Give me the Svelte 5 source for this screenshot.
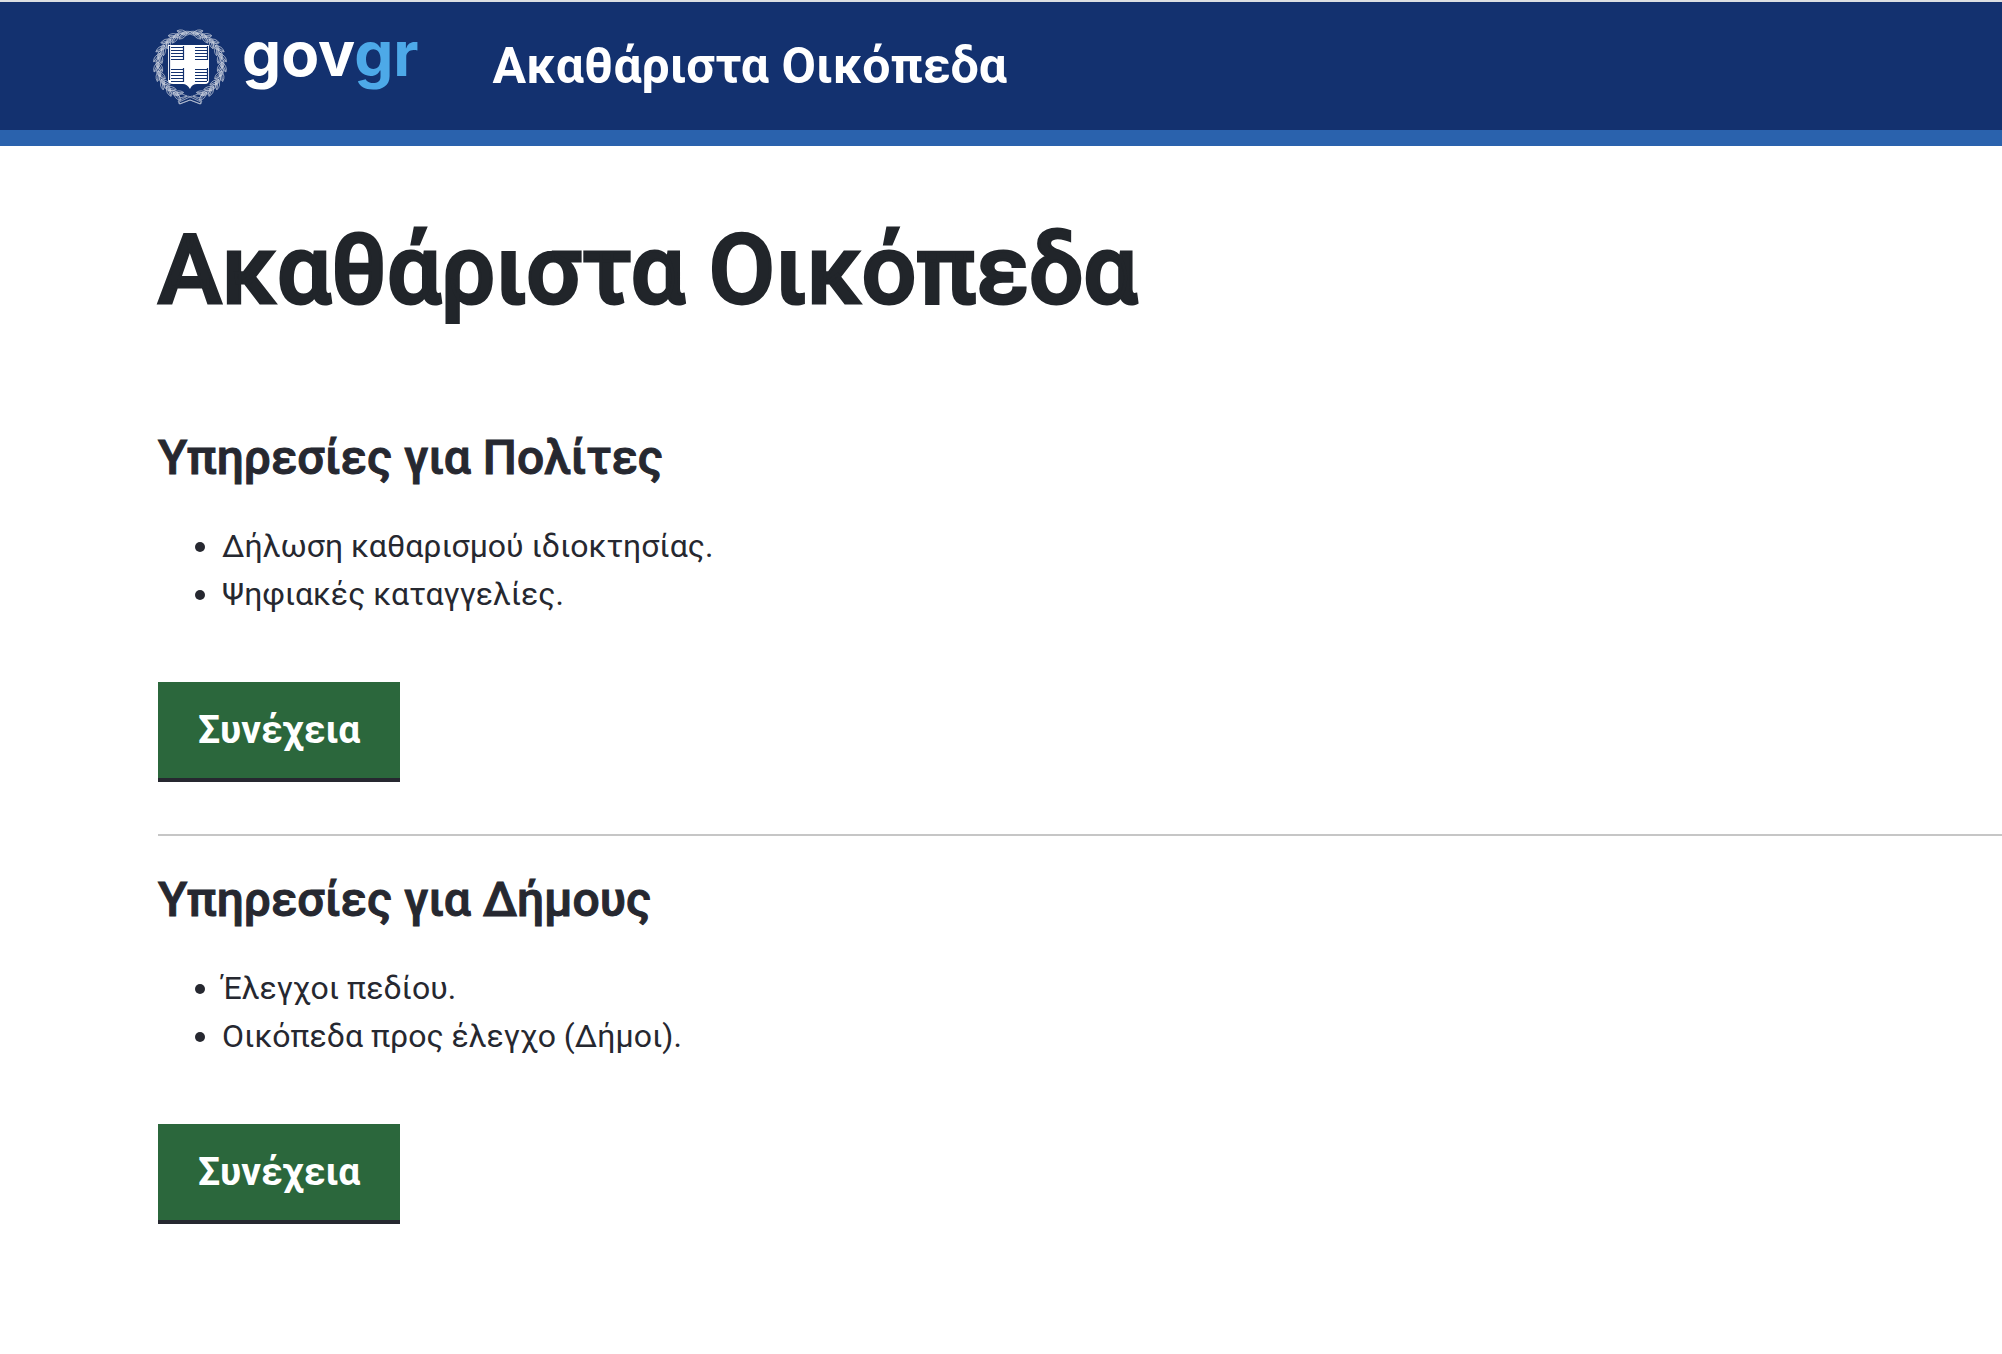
<script>
  const title = "Ακαθάριστα Οικόπεδα";

  const services = [
    {
      heading: "Υπηρεσίες για Πολίτες",
      items: ["Δήλωση καθαρισμού ιδιοκτησίας.", "Ψηφιακές καταγγελίες."]
    },
    {
      heading: "Υπηρεσίες για Δήμους",
      items: ["Έλεγχοι πεδίου.", "Οικόπεδα προς έλεγχο (Δήμοι)."]
    }
  ];

  // leaves of the laurel wreath, one branch; the other one is mirrored
  const leaves = [];
  for(let a = 22; a < 170; a += 16){
    leaves.push({turn: -a, tilt: -28, y: 34});
    leaves.push({turn: -a, tilt: 26, y: 30});
    leaves.push({turn: -a - 7, tilt: 0, y: 32});
  }

  const stripes = [0, 1, 2, 3, 4];
</script>

<svelte:head>
  <title>{title}</title>
</svelte:head>

<header>
  <a class="logo" href="/" aria-label="govgr">
    <svg class="emblem" viewBox="0 0 76 78" aria-hidden="true">
      <g class="wreath">
        {#each [1, -1] as side}
          <g transform="translate(38 38) scale({side} 1)">
            {#each leaves as leaf}
              <g transform="rotate({leaf.turn}) translate(0 {leaf.y}) rotate({leaf.tilt})">
                <path d="M-5 0Q0 -4 6 0Q0 4 -5 0ZM-4 0H3" />
              </g>
            {/each}
            <path d="M-11 37L2 31L12 36L10 39L0 35L-11 39ZM-13 27L-3 31L-10 33Z" />
          </g>
        {/each}
      </g>
      <path class="shield" d="M16 18H57V53Q57 57 53 57H45Q40 57 38 62Q35 57 31 57H21Q16 57 16 53Z" />
      <g class="stripes">
        {#each stripes as i}
          <path d="M19 {20.5 + i * 3}H31M43 {20.5 + i * 3}H55M19 {42.5 + i * 3}H31M43 {42.5 + i * 3}H55" />
        {/each}
        <path d="M31.5 19V33M31.5 41V55M17.5 19V53M55.5 19V33M55.5 41V54" />
      </g>
    </svg>
    <span class="wordmark">gov<span>gr</span></span>
  </a>
  <span class="service">{title}</span>
</header>

<main>
  <h1>{title}</h1>
  {#each services as service}
    <section>
      <h2>{service.heading}</h2>
      <ul>
        {#each service.items as item}
          <li>{item}</li>
        {/each}
      </ul>
      <button type="button">Συνέχεια</button>
    </section>
  {/each}
</main>

<style>
:global(body){
  background: #fff;
  color: #262830;
  font-family: Roboto, "Noto Sans", sans-serif;
}

header{
  display: flex;
  align-items: center;
  gap: 74px;
  height: 128px;
  padding-left: 152px;
  background: #13316f;
  border-top: 2px solid #dcdfe2;
  border-bottom: 16px solid #2a62ad;
  color: #fff;
}

.logo{
  display: flex;
  align-items: center;
  gap: 14px;
  color: #fff;
  text-decoration: none;
}

.emblem{
  width: 76px;
  height: 78px;
}

.wreath{
  fill: none;
  stroke: #fff;
  stroke-width: .7;
  opacity: .75;
}

.shield{
  fill: #fff;
}

.stripes{
  fill: none;
  stroke: #13316f;
  stroke-width: 1.2;
}

.wordmark{
  font-family: Inter, sans-serif;
  font-size: 62px;
  font-weight: 700;
  line-height: 80px;
  padding-bottom: 24px;
}

.wordmark span{
  color: #4da9e8;
}

.service{
  font-size: 50px;
  font-weight: 700;
  line-height: 64px;
}

main{
  padding: 70px 0 0 158px;
}

h1{
  margin: 0 0 102px;
  color: #21252a;
  font-size: 96px;
  font-weight: 500;
  line-height: 108px;
  -webkit-text-stroke: 3px;
}

section + section{
  margin-top: 52px;
  padding-top: 32px;
  border-top: 2px solid #c6c6c6;
}

h2{
  margin: 0 0 32px;
  font-size: 48px;
  font-weight: 500;
  line-height: 64px;
  -webkit-text-stroke: 1px;
}

ul{
  margin: 0 0 64px;
  padding-left: 64px;
}

li{
  font-size: 32px;
  line-height: 48px;
}

button{
  display: block;
  padding: 24px 40px;
  border: 0;
  border-bottom: 4px solid #262830;
  background: #2b673c;
  color: #fff;
  font-family: inherit;
  font-size: 39px;
  font-weight: 700;
  line-height: 48px;
}
</style>
